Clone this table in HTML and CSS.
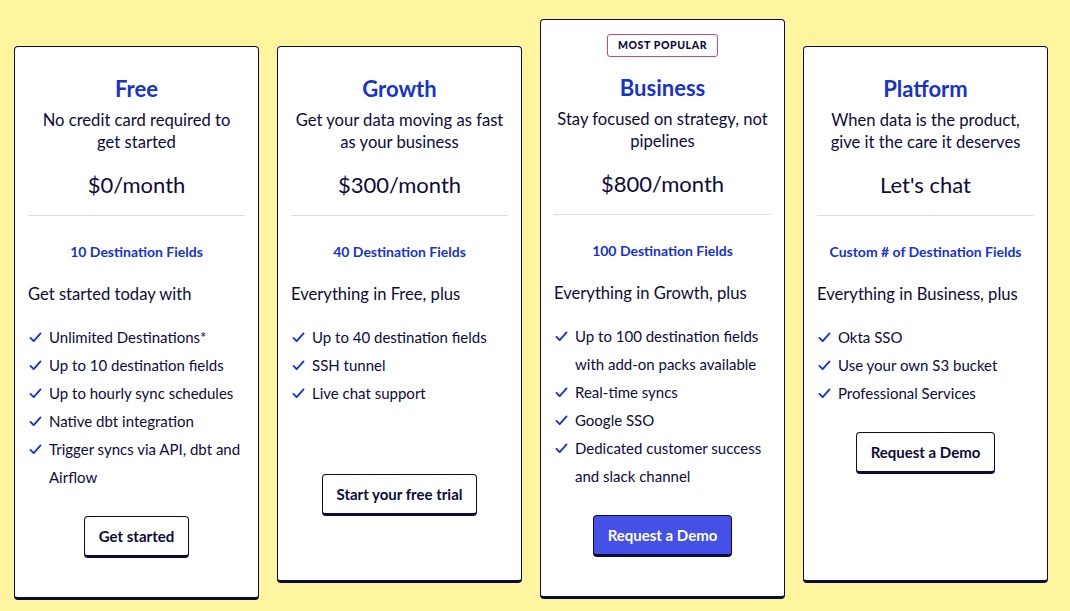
FILE: index.html
```html
<!DOCTYPE html>
<html lang="en">
<head>
<meta charset="utf-8">
<title>Pricing</title>
<link rel="stylesheet" href="styles.css">
</head>
<body>
<div class="plans">
  <div class="card">
    <h2 class="title">Free</h2>
    <p class="sub">No credit card required to<br>get started</p>
    <p class="price">$0/month</p>
    <hr class="divider">
    <p class="fields">10 Destination Fields</p>
    <p class="intro">Get started today with</p>
    <ul class="list">
      <li><svg class="check" viewBox="0 0 14 12"><path d="M1.5 6.5 L5 10 L12.5 1.5"/></svg>Unlimited Destinations*</li>
      <li><svg class="check" viewBox="0 0 14 12"><path d="M1.5 6.5 L5 10 L12.5 1.5"/></svg>Up to 10 destination fields</li>
      <li><svg class="check" viewBox="0 0 14 12"><path d="M1.5 6.5 L5 10 L12.5 1.5"/></svg>Up to hourly sync schedules</li>
      <li><svg class="check" viewBox="0 0 14 12"><path d="M1.5 6.5 L5 10 L12.5 1.5"/></svg>Native dbt integration</li>
      <li><svg class="check" viewBox="0 0 14 12"><path d="M1.5 6.5 L5 10 L12.5 1.5"/></svg><span>Trigger syncs via API, dbt and<br>Airflow</span></li>
    </ul>
    <div class="action"><button class="btn">Get started</button></div>
  </div>

  <div class="card card--short">
    <h2 class="title">Growth</h2>
    <p class="sub">Get your data moving as fast<br>as your business</p>
    <p class="price">$300/month</p>
    <hr class="divider">
    <p class="fields">40 Destination Fields</p>
    <p class="intro">Everything in Free, plus</p>
    <ul class="list">
      <li><svg class="check" viewBox="0 0 14 12"><path d="M1.5 6.5 L5 10 L12.5 1.5"/></svg>Up to 40 destination fields</li>
      <li><svg class="check" viewBox="0 0 14 12"><path d="M1.5 6.5 L5 10 L12.5 1.5"/></svg>SSH tunnel</li>
      <li><svg class="check" viewBox="0 0 14 12"><path d="M1.5 6.5 L5 10 L12.5 1.5"/></svg>Live chat support</li>
    </ul>
    <div class="action action--low"><button class="btn">Start your free trial</button></div>
  </div>

  <div class="card card--featured">
    <div class="badge-row"><span class="badge">MOST POPULAR</span></div>
    <h2 class="title">Business</h2>
    <p class="sub">Stay focused on strategy, not<br>pipelines</p>
    <p class="price">$800/month</p>
    <hr class="divider">
    <p class="fields">100 Destination Fields</p>
    <p class="intro">Everything in Growth, plus</p>
    <ul class="list">
      <li><svg class="check" viewBox="0 0 14 12"><path d="M1.5 6.5 L5 10 L12.5 1.5"/></svg><span>Up to 100 destination fields<br>with add-on packs available</span></li>
      <li><svg class="check" viewBox="0 0 14 12"><path d="M1.5 6.5 L5 10 L12.5 1.5"/></svg>Real-time syncs</li>
      <li><svg class="check" viewBox="0 0 14 12"><path d="M1.5 6.5 L5 10 L12.5 1.5"/></svg>Google SSO</li>
      <li><svg class="check" viewBox="0 0 14 12"><path d="M1.5 6.5 L5 10 L12.5 1.5"/></svg><span>Dedicated customer success<br>and slack channel</span></li>
    </ul>
    <div class="action"><button class="btn btn--primary">Request a Demo</button></div>
  </div>

  <div class="card card--short">
    <h2 class="title">Platform</h2>
    <p class="sub">When data is the product,<br>give it the care it deserves</p>
    <p class="price">Let's chat</p>
    <hr class="divider">
    <p class="fields">Custom # of Destination Fields</p>
    <p class="intro">Everything in Business, plus</p>
    <ul class="list">
      <li><svg class="check" viewBox="0 0 14 12"><path d="M1.5 6.5 L5 10 L12.5 1.5"/></svg>Okta SSO</li>
      <li><svg class="check" viewBox="0 0 14 12"><path d="M1.5 6.5 L5 10 L12.5 1.5"/></svg>Use your own S3 bucket</li>
      <li><svg class="check" viewBox="0 0 14 12"><path d="M1.5 6.5 L5 10 L12.5 1.5"/></svg>Professional Services</li>
    </ul>
    <div class="action"><button class="btn">Request a Demo</button></div>
  </div>
</div>
</body>
</html>
```

FILE: styles.css
```css
* { box-sizing: border-box; }
html, body { margin: 0; padding: 0; }
body {
  background: #fff59e;
  font-family: Lato, "Liberation Sans", sans-serif;
  color: #0d0b3b;
  width: 1070px;
  height: 611px;
  overflow: hidden;
}
.plans {
  display: flex;
  align-items: flex-start;
  gap: 18px;
  padding: 19px 0 0 14px;
}
.card {
  width: 245px;
  margin-top: 27px;
  background: #fff;
  border: 1px solid #0d0b3b;
  border-bottom-width: 3px;
  border-radius: 4px;
  padding: 28px 13px 39px;
  display: flex;
  flex-direction: column;
}
.card--short { height: 537px; }
.card--featured { margin-top: 0; padding-top: 14px; }
.badge-row { display: flex; justify-content: center; margin-bottom: 17px; }
.badge {
  display: inline-block;
  height: 23px;
  line-height: 21px;
  width: 111px;
  text-align: center;
  border: 1px solid #d2457f;
  border-radius: 3px;
  font-size: 10.5px;
  font-weight: 900;
  letter-spacing: 0.6px;
  color: #0d0b3b;
}
.title {
  margin: 0;
  text-align: center;
  font-size: 22px;
  line-height: 28px;
  font-weight: 700;
  color: #1632d2;
}
.sub {
  margin: 6px 0 0;
  text-align: center;
  font-size: 16.6px;
  line-height: 22px;
}
.price {
  margin: 18px 0 0;
  text-align: center;
  font-size: 22px;
  line-height: 28px;
}
.divider {
  margin: 16px 0 0;
  border: 0;
  height: 1px;
  background: #dcdce2;
}
.fields {
  margin: 26px 0 0;
  text-align: center;
  font-size: 14px;
  line-height: 20px;
  font-weight: 700;
  color: #1632d2;
}
.intro {
  margin: 20px 0 0;
  font-size: 16.6px;
  line-height: 24px;
}
.list {
  list-style: none;
  margin: 17px 0 0;
  padding: 0;
  font-size: 15px;
  line-height: 28px;
}
.list li { display: flex; align-items: flex-start; }
.check {
  flex: none;
  width: 13px;
  height: 11px;
  margin: 9px 7px 0 1px;
  fill: none;
  stroke: #1632d2;
  stroke-width: 2;
  stroke-linecap: round;
  stroke-linejoin: round;
}
.action { display: flex; justify-content: center; margin-top: 25px; }
.action--low { margin-top: 67px; }
.btn {
  font-family: Lato, "Liberation Sans", sans-serif;
  height: 42px;
  padding: 0 14px;
  background: #fff;
  color: #0d0b3b;
  border: 1px solid #0d0b3b;
  border-bottom-width: 3px;
  border-radius: 4px;
  font-size: 15px;
  font-weight: 700;
  cursor: pointer;
}
.btn--primary {
  background: #4550e6;
  color: #fff;
}
```
